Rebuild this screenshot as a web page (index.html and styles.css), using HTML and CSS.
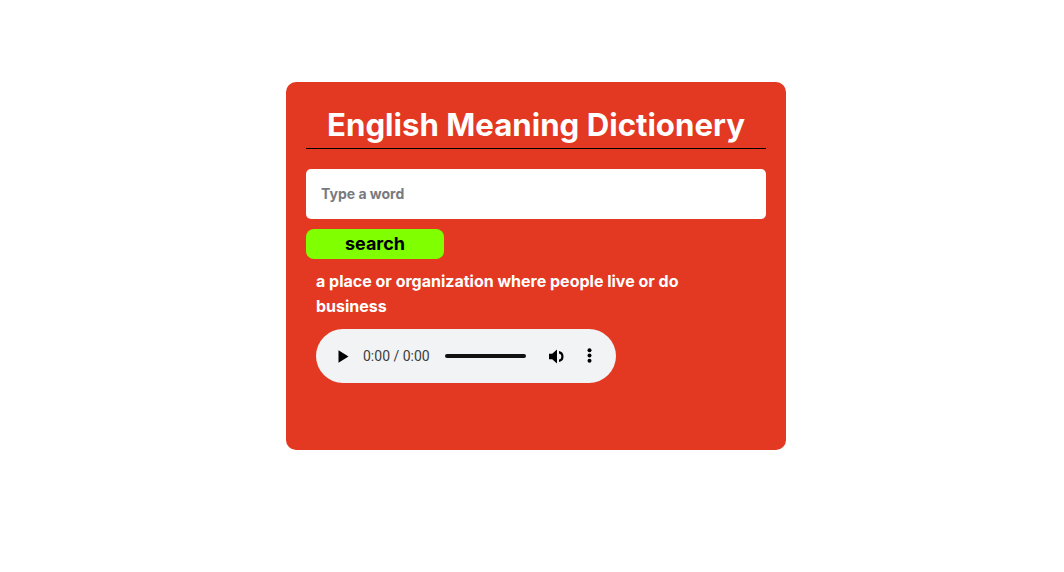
FILE: index.html
```html
<!DOCTYPE html>
<html>
<head>
<meta charset="utf-8">
<link rel="stylesheet" href="styles.css">
</head>
<body>
<div class="page">
  <div class="card">
    <h1 class="title">English Meaning Dictionery</h1>
    <input class="word" type="text" placeholder="Type a word" autofocus>
    <button class="search">search</button>
    <p class="meaning">a place or organization where people live or do<br>business</p>
    <div class="player" role="group" aria-label="audio player">
      <svg class="play" width="11" height="13" viewBox="0 0 11 13"><path d="M0.5 0.3 L10.5 6.5 L0.5 12.7 Z" fill="#000"/></svg>
      <span class="time">0:00 / 0:00</span>
      <span class="track"></span>
      <svg class="vol" width="17" height="15" viewBox="0 0 17 15"><path d="M0 4.8h3.2v5.4H0z M3.2 4.8 L8 0.6 V14.4 L3.2 10.2 Z" fill="#000"/><path d="M10 2 A5.6 5.6 0 0 1 10 13 V10.6 A3.2 3.2 0 0 0 10 4.4 Z" fill="#000"/></svg>
      <svg class="more" width="5" height="16" viewBox="0 0 5 16"><circle cx="2.5" cy="2.2" r="2"/><circle cx="2.5" cy="7.5" r="2"/><circle cx="2.5" cy="12.8" r="2"/></svg>
    </div>
  </div>
</div>
</body>
</html>
```
FILE: styles.css
```css
* { box-sizing: border-box; }
html, body { margin: 0; padding: 0; background: #fff; }
body { font-family: "Inter", "Open Sans", sans-serif; }
.page {
  display: flex;
  justify-content: center;
  padding: 82px 0 0 8px;
}
.card {
  width: 500px;
  height: 368px;
  background: #e33821;
  border-radius: 10px;
  padding: 20px 20px;
  display: flex;
  flex-direction: column;
  align-items: flex-start;
}
.title {
  align-self: stretch;
  margin: 0;
  padding-top: 0;
  color: #fff;
  font-size: 31.2px;
  font-weight: 700;
  line-height: 46px;
  text-align: center;
  border-bottom: 1px solid #000;
  letter-spacing: 0;
}
.word {
  align-self: stretch;
  margin-top: 20px;
  height: 50px;
  border: none;
  border-radius: 5px;
  padding: 0 15px 2px;
  font-family: inherit;
  font-size: 14px;
  font-weight: 700;
  outline: none;
  color: #333;
  caret-color: #000;
}
.word::placeholder { color: #777a80; }
.search {
  margin-top: 10px;
  width: 138px;
  height: 30px;
  border: none;
  border-radius: 8px;
  background: #7fff00;
  color: #000;
  font-family: inherit;
  font-size: 18px;
  font-weight: 700;
  padding: 0 0 2px;
}
.meaning {
  margin: 10px 0 0 10px;
  color: #fff;
  font-size: 16px;
  font-weight: 700;
  line-height: 25px;
}
.player {
  margin: 10px 0 0 10px;
  width: 300px;
  height: 54px;
  border-radius: 27px;
  background: #f1f3f4;
  display: flex;
  align-items: center;
  padding-left: 22px;
}
.play { display: block; flex: none; }
.time {
  margin-left: 14px;
  font-family: "Roboto", sans-serif;
  font-size: 14px;
  color: #3c3c3c;
  white-space: nowrap;
}
.track {
  margin-left: 15px;
  width: 81px;
  height: 4px;
  border-radius: 2px;
  background: #111;
  flex: none;
}
.vol { display: block; margin-left: 23px; flex: none; }
.more { display: block; margin-left: 21px; flex: none; fill: #000; }
```
